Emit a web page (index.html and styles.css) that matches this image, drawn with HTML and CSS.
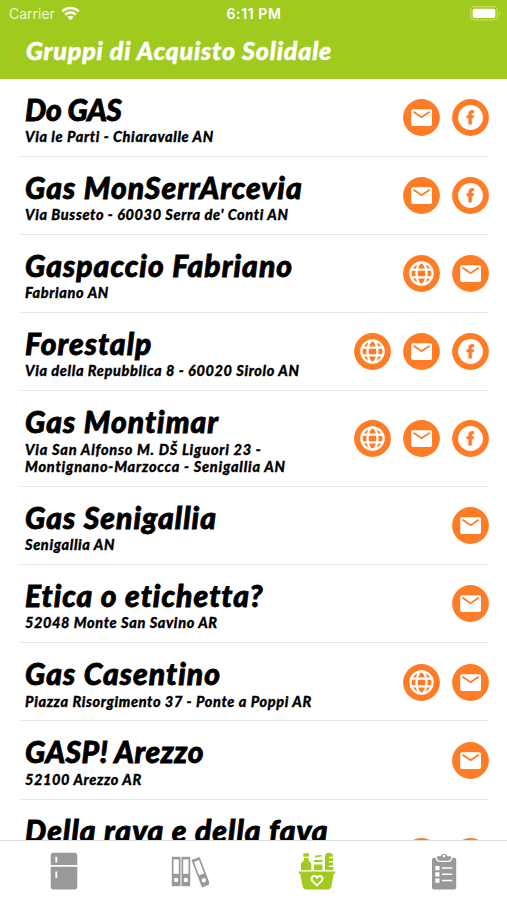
FILE: index.html
```
<!DOCTYPE html>
<html lang="it">

<head>
    <meta charset="utf-8">
    <title>Gruppi di Acquisto Solidale</title>
    <meta name="viewport" content="width=device-width, initial-scale=1">
    <link rel="stylesheet" href="styles.css">
</head>

<body>
    <svg class="sprite" width="0" height="0">
        <symbol id="mail" viewBox="0 0 37 37">
            <circle cx="18.5" cy="18.5" r="18.4" fill="#ff7c26" />
            <rect x="8.2" y="10.3" width="20.8" height="16.8" rx="1.8" fill="#fff" />
            <path d="M10.5 12.7l8.1 5.5 8.1-5.5" fill="none" stroke="#ff7c26" stroke-width="1.8" />
        </symbol>
        <symbol id="facebook" viewBox="0 0 37 37">
            <circle cx="18.5" cy="18.5" r="18.4" fill="#ff7c26" />
            <circle cx="18.5" cy="18.5" r="12.4" fill="#fff" />
            <path d="M16.7 25.3v-6.2h-1.9v-2.6h1.9v-1.6c0-2.5 1.4-3.7 3.5-3.7l1.6.1v2.6h-.9c-1 0-1.2.6-1.2 1.3v1.3h2.1l-.4 2.6h-1.7v6.2z" fill="#ff7c26" stroke="#ff7c26" stroke-width=".5" />
        </symbol>
        <symbol id="globe" viewBox="0 0 37 37">
            <circle cx="18.5" cy="18.5" r="18.4" fill="#ff7c26" />
            <g fill="none" stroke="#fff" stroke-width="2.3">
                <circle cx="18.5" cy="18.5" r="11.1" />
                <ellipse cx="18.5" cy="18.5" rx="5" ry="11.1" />
                <path d="M8.5 14.7h20M8.5 22.3h20" />
            </g>
        </symbol>
    </svg>

    <header class="header">
        <div class="status">
            <div class="carrier">
                <span>Carrier</span>
                <svg width="19" height="15" viewBox="0 0 19 15">
                    <g fill="none" stroke="#fff" stroke-width="2.5">
                        <path d="M1.2 5.3a12 12 0 0 1 16.6 0" />
                        <path d="M4.2 8.7a7.7 7.7 0 0 1 10.6 0" />
                    </g>
                    <path d="M6.4 11.1a4.5 4.5 0 0 1 6.2 0L9.5 14.3z" fill="#fff" />
                </svg>
            </div>
            <span class="time">6:11 PM</span>
            <svg class="battery" width="31" height="15" viewBox="0 0 31 15">
                <rect x=".7" y=".7" width="26.6" height="13.2" rx="4" fill="none" stroke="#c3de66" stroke-width="1.2" />
                <rect x="2.7" y="2.7" width="22.6" height="9.2" rx="2" fill="#fff" />
                <path d="M29 5.2a2.5 2.5 0 0 1 0 4.4z" fill="#c3de66" />
            </svg>
        </div>
        <h1 class="title">Gruppi di Acquisto Solidale</h1>
    </header>

    <main class="list">
        <div class="row">
            <div class="info">
                <h2 class="name name-short">Do GAS</h2>
                <p class="address">Via le Parti - Chiaravalle AN</p>
            </div>
            <div class="links">
                <svg class="icon"><use href="#mail" /></svg>
                <svg class="icon"><use href="#facebook" /></svg>
            </div>
        </div>
        <div class="row">
            <div class="info">
                <h2 class="name">Gas MonSerrArcevia</h2>
                <p class="address">Via Busseto - 60030 Serra de' Conti AN</p>
            </div>
            <div class="links">
                <svg class="icon"><use href="#mail" /></svg>
                <svg class="icon"><use href="#facebook" /></svg>
            </div>
        </div>
        <div class="row">
            <div class="info">
                <h2 class="name">Gaspaccio Fabriano</h2>
                <p class="address">Fabriano AN</p>
            </div>
            <div class="links">
                <svg class="icon"><use href="#globe" /></svg>
                <svg class="icon"><use href="#mail" /></svg>
            </div>
        </div>
        <div class="row">
            <div class="info">
                <h2 class="name">Forestalp</h2>
                <p class="address">Via della Repubblica 8 - 60020 Sirolo AN</p>
            </div>
            <div class="links">
                <svg class="icon"><use href="#globe" /></svg>
                <svg class="icon"><use href="#mail" /></svg>
                <svg class="icon"><use href="#facebook" /></svg>
            </div>
        </div>
        <div class="row">
            <div class="info">
                <h2 class="name">Gas Montimar</h2>
                <p class="address address-long">Via San Alfonso M. DŠ Liguori 23 -<br>Montignano-Marzocca - Senigallia AN</p>
            </div>
            <div class="links">
                <svg class="icon"><use href="#globe" /></svg>
                <svg class="icon"><use href="#mail" /></svg>
                <svg class="icon"><use href="#facebook" /></svg>
            </div>
        </div>
        <div class="row">
            <div class="info">
                <h2 class="name">Gas Senigallia</h2>
                <p class="address">Senigallia AN</p>
            </div>
            <div class="links">
                <svg class="icon"><use href="#mail" /></svg>
            </div>
        </div>
        <div class="row">
            <div class="info">
                <h2 class="name">Etica o etichetta?</h2>
                <p class="address">52048 Monte San Savino AR</p>
            </div>
            <div class="links">
                <svg class="icon"><use href="#mail" /></svg>
            </div>
        </div>
        <div class="row">
            <div class="info">
                <h2 class="name">Gas Casentino</h2>
                <p class="address">Piazza Risorgimento 37 - Ponte a Poppi AR</p>
            </div>
            <div class="links">
                <svg class="icon"><use href="#globe" /></svg>
                <svg class="icon"><use href="#mail" /></svg>
            </div>
        </div>
        <div class="row">
            <div class="info">
                <h2 class="name name-caps">GASP! Arezzo</h2>
                <p class="address">52100 Arezzo AR</p>
            </div>
            <div class="links">
                <svg class="icon"><use href="#mail" /></svg>
            </div>
        </div>
        <div class="row row-tall">
            <div class="info">
                <h2 class="name">Della rava e della fava</h2>
            </div>
            <div class="links">
                <svg class="icon"><use href="#globe" /></svg>
                <svg class="icon"><use href="#mail" /></svg>
            </div>
        </div>
    </main>

    <nav class="tabs">
        <a class="tab">
            <svg width="38" height="38" viewBox="0 0 38 38">
                <path d="M6.7 13V3.4Q6.7.8 9.3.8h21.4q2.6 0 2.6 2.6V13zM6.7 14.8h26.6v20q0 2.6-2.6 2.6H9.3q-2.6 0-2.6-2.6z" fill="currentColor" />
                <path d="M12.3 4.7v5.8M12.3 19.5v6.6" stroke="#fff" stroke-width="1.8" />
            </svg>
        </a>
        <a class="tab">
            <svg width="38" height="38" viewBox="0 0 38 38">
                <g id="binder">
                    <path d="M.8 4.8h8.7v29.4H.8z" fill="currentColor" />
                    <path d="M2.5 7.4h5.3v14.4H2.5z" fill="#fff" />
                    <circle cx="5.1" cy="28" r="2.2" fill="#fff" />
                </g>
                <use href="#binder" x="9.7" />
                <use href="#binder" transform="translate(18 3.9) rotate(-21)" />
            </svg>
        </a>
        <a class="tab active">
            <svg width="38" height="38" viewBox="0 0 38 38">
                <g fill="currentColor">
                    <path d="M5.3 1.2h5.8v3.5H5.3zM5.9 6.1h4.7v2.3l2.7 3.2v6.6H3v-6.6l2.9-3.2z" />
                    <path d="M16 12.6h8.5v5.6H16zM17 3.8l6.5-1v1.7l-6.5 1zM16 8h8.5v2H16z" />
                    <path d="M27 18.2V4.8q0-4 4-4t4.2 4H31v1.5h4.2v2.8H31v1.5h4.2v2.8H31v1.5h4.2v3.3z" />
                    <path d="M.8 19.6h36.4v2.2h-1.4l-2.3 12.3q-.6 3.4-4 3.4h-21q-3.4 0-4-3.4L2.2 21.8H.8z" />
                </g>
                <path d="M19 33.5l-4.6-4.6q-2.1-2.6.2-4.5 2.4-1.5 4.4 1.2 2-2.7 4.4-1.2 2.3 1.9.2 4.5z" fill="none" stroke="#fff" stroke-width="1.9" />
            </svg>
        </a>
        <a class="tab">
            <svg width="38" height="38" viewBox="0 0 38 38">
                <rect x="7" y="5.8" width="24.2" height="31.6" rx="2" fill="currentColor" />
                <path d="M11.9 3.9h3.7a3.5 3.5 0 0 1 6.8 0h3.7v2.2q-.5 2.6-3 2.6h-8.2q-2.5 0-3-2.6z" fill="currentColor" stroke="#fff" stroke-width="2.6" />
                <path d="M11.9 4.3h3.7a3.5 3.5 0 0 1 6.8 0h3.7v1.8q-.5 2.6-3 2.6h-8.2q-2.5 0-3-2.6z" fill="currentColor" />
                <circle cx="19" cy="4.1" r="1.3" fill="#fff" />
                <path d="M10.3 14h4.2v4.2h-4.2zM10.3 20.2h4.2v4.2h-4.2zM10.3 26.5h4.2v4.2h-4.2z" fill="#fff" />
                <path d="M17 16.1h10.3M17 22.3h10.3M17 28.6h10.3" stroke="#fff" stroke-width="1.5" />
            </svg>
        </a>
    </nav>
</body>

</html>
```
FILE: styles.css
```
html,
body {
    height: 100%;
    margin: 0;
    overflow: hidden;
}

body {
    display: flex;
    flex-direction: column;
    background-color: #fff;
    color: #000;
    font-family: Lato, 'Open Sans', sans-serif;
}

h1,
h2,
p {
    margin: 0;
}

.sprite {
    display: none;
}

.header {
    flex: none;
    height: 79px;
    background-color: #a1ca1f;
    color: #fff;
}

.status {
    display: grid;
    grid-template-columns: 1fr auto 1fr;
    align-items: center;
    height: 27px;
    padding: 0 6px 0 9px;
    font-family: Inter, sans-serif;
    font-size: 14px;
}

.carrier {
    display: flex;
    align-items: center;
    gap: 6px;
    color: #eef6d2;
}

.time {
    padding-right: 2px;
    font-weight: 600;
    letter-spacing: 0.6px;
}

.battery {
    justify-self: end;
}

.title {
    padding-left: 26px;
    font-size: 25px;
    line-height: 47px;
    font-weight: 900;
    font-style: italic;
    letter-spacing: 0.82px;
    -webkit-text-stroke: 0.5px;
}

.list {
    flex: 1;
    min-height: 0;
    overflow: hidden;
    padding: 0 18px 0 20px;
}

.row {
    display: flex;
    align-items: center;
    justify-content: space-between;
    box-sizing: border-box;
    padding: 15px 0 10.2px 5px;
    border-bottom: 1px solid #e8e8e8;
    white-space: nowrap;
}

.row-tall {
    height: 110px;
}

.row-tall .info {
    align-self: flex-start;
}

.name {
    font-size: 30px;
    line-height: 31.4px;
    font-weight: 900;
    font-style: italic;
    letter-spacing: 1.05px;
    -webkit-text-stroke: 0.8px;
}

.name-caps {
    letter-spacing: 0.5px;
}

.name-short {
    letter-spacing: -0.3px;
}

.address {
    padding-top: 2.8px;
    font-size: 14.5px;
    line-height: 17.7px;
    font-weight: 900;
    font-style: italic;
    letter-spacing: 0.62px;
    -webkit-text-stroke: 0.3px;
}

.address-long {
    letter-spacing: 0.78px;
}

.links {
    display: flex;
    gap: 12px;
    padding-bottom: 4.6px;
}

.row-tall .links {
    padding-bottom: 0;
}

.icon {
    width: 37px;
    height: 37px;
}

.tabs {
    flex: none;
    display: grid;
    grid-template-columns: repeat(4, 1fr);
    height: 60px;
    box-sizing: border-box;
    border-top: 1px solid #ddd;
    background-color: #fff;
}

.tab {
    display: flex;
    justify-content: center;
    padding-top: 11px;
    color: #999;
}

.tab.active {
    color: #a1ca1f;
}
```
